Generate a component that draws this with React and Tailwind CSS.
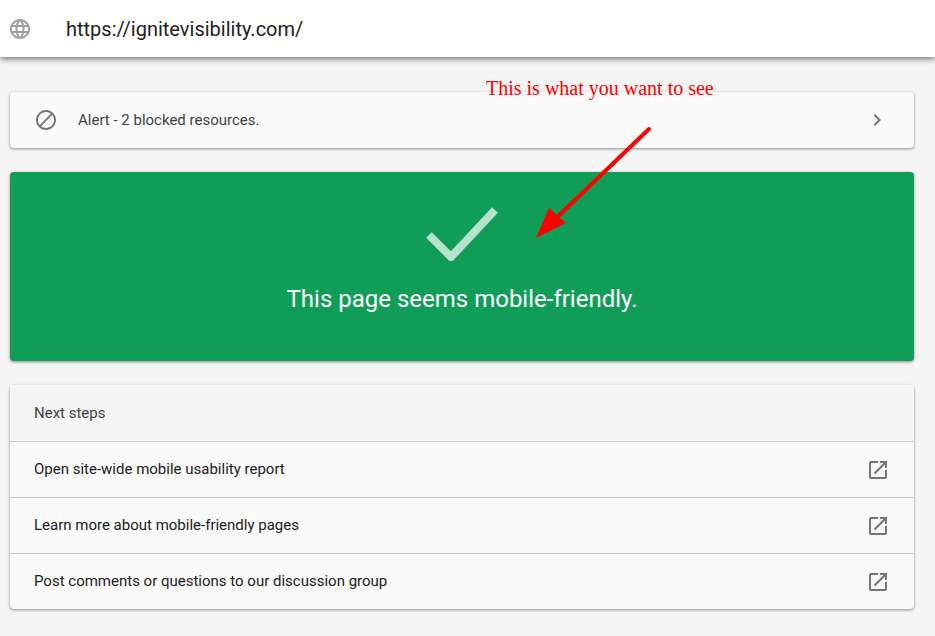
import React from 'react';

const steps = [
  'Open site-wide mobile usability report',
  'Learn more about mobile-friendly pages',
  'Post comments or questions to our discussion group',
];

const GlobeIcon = () => (
  <svg width="24" height="24" viewBox="0 0 24 24" fill="#9e9e9e">
    <path d="M11.99 2C6.47 2 2 6.48 2 12s4.47 10 9.99 10C17.52 22 22 17.52 22 12S17.52 2 11.99 2zm6.93 6h-2.95c-.32-1.25-.78-2.45-1.38-3.56 1.84.63 3.37 1.91 4.33 3.56zM12 4.04c.83 1.2 1.48 2.53 1.91 3.96h-3.82c.43-1.43 1.08-2.76 1.91-3.96zM4.26 14C4.1 13.36 4 12.69 4 12s.1-1.36.26-2h3.38c-.08.66-.14 1.32-.14 2 0 .68.06 1.34.14 2H4.26zm.82 2h2.95c.32 1.25.78 2.45 1.38 3.56-1.84-.63-3.37-1.9-4.33-3.56zm2.95-8H5.08c.96-1.66 2.49-2.93 4.33-3.56C8.81 5.55 8.35 6.75 8.03 8zM12 19.96c-.83-1.2-1.48-2.53-1.91-3.96h3.82c-.43 1.43-1.08 2.76-1.91 3.96zM14.34 14H9.66c-.09-.66-.16-1.32-.16-2 0-.68.07-1.35.16-2h4.68c.09.65.16 1.32.16 2 0 .68-.07 1.34-.16 2zm.25 5.56c.6-1.11 1.06-2.31 1.38-3.56h2.95c-.96 1.65-2.49 2.93-4.33 3.56zM16.36 14c.08-.66.14-1.32.14-2 0-.68-.06-1.34-.14-2h3.38c.16.64.26 1.31.26 2s-.1 1.36-.26 2h-3.38z" />
  </svg>
);

const BlockedIcon = () => (
  <svg width="24" height="24" viewBox="0 0 24 24" fill="#757575">
    <path d="M12 2C6.48 2 2 6.48 2 12s4.48 10 10 10 10-4.48 10-10S17.52 2 12 2zM4 12c0-4.42 3.58-8 8-8 1.85 0 3.55.63 4.9 1.69L5.69 16.9C4.63 15.55 4 13.85 4 12zm8 8c-1.85 0-3.55-.63-4.9-1.69L18.31 7.1C19.37 8.45 20 10.15 20 12c0 4.42-3.58 8-8 8z" />
  </svg>
);

const ChevronIcon = () => (
  <svg width="24" height="24" viewBox="0 0 24 24" fill="#757575">
    <path d="M10 6 8.59 7.41 13.17 12l-4.58 4.59L10 18l6-6z" />
  </svg>
);

const OpenIcon = () => (
  <svg width="24" height="24" viewBox="0 0 24 24" fill="#757575">
    <path d="M19 19H5V5h7V3H5c-1.11 0-2 .9-2 2v14c0 1.1.89 2 2 2h14c1.1 0 2-.9 2-2v-7h-2v7zM14 3v2h3.59l-9.83 9.83 1.41 1.41L19 6.41V10h2V3h-7z" />
  </svg>
);

const App = () => {
  return (
    <div className="relative h-[636px] w-[935px] overflow-hidden bg-[#f5f5f5] font-['Roboto',sans-serif]">
      {/* URL bar */}
      <div className="flex h-[57px] items-center bg-white shadow-[0_2px_6px_rgba(0,0,0,0.55)]">
        <div className="ml-2 flex w-[58px] shrink-0">
          <GlobeIcon />
        </div>
        <span className="text-[20px] text-[#212121]">https://ignitevisibility.com/</span>
      </div>

      <div className="flex flex-col gap-6 pt-[35px] pr-[21px] pl-2.5">
        {/* Alert */}
        <div className="flex h-14 items-center rounded-sm bg-[#fafafa] pr-[25px] pl-6 shadow-[0_1px_3px_rgba(0,0,0,0.45)]">
          <BlockedIcon />
          <span className="ml-5 flex-1 text-[15px] text-[#424242]">Alert - 2 blocked resources.</span>
          <ChevronIcon />
        </div>

        {/* Verdict */}
        <div className="flex h-[189px] flex-col items-center rounded-sm bg-[#0f9d58] shadow-[0_1px_3px_rgba(0,0,0,0.45)]">
          <svg className="mt-[33px]" width="72" height="56" viewBox="0 0 72 56">
            <path d="M3 30 L25 52 L69 5" fill="none" stroke="#b7e2cd" strokeWidth="8" />
          </svg>
          <p className="mt-[20px] text-[24px] text-white">This page seems mobile-friendly.</p>
        </div>

        {/* Next steps */}
        <div className="rounded-sm bg-[#fafafa] shadow-[0_1px_3px_rgba(0,0,0,0.45)]">
          <div className="flex h-14 items-center bg-[#f5f5f5] px-6 text-[15px] text-[#424242]">Next steps</div>
          {steps.map((step) => (
            <div key={step} className="flex h-14 items-center border-t border-[#c8c8c8] pr-6 pl-6 text-[15px] text-[#212121]">
              <span className="flex-1">{step}</span>
              <OpenIcon />
            </div>
          ))}
        </div>
      </div>

      {/* Annotation drawn over the page */}
      <span className="absolute top-[76px] left-[486px] font-['Liberation_Serif',serif] text-[20px] leading-6 text-[#ff0000]">
        This is what you want to see
      </span>
      <svg className="absolute top-[125px] left-[530px]" width="125" height="118" viewBox="0 0 125 118">
        <path d="M119 4 L20 99" fill="none" stroke="#ff0000" strokeWidth="4" strokeLinecap="round" />
        <path d="M6 113 L19 83 L36 98 Z" fill="#ff0000" />
      </svg>
    </div>
  );
};

export default App;
